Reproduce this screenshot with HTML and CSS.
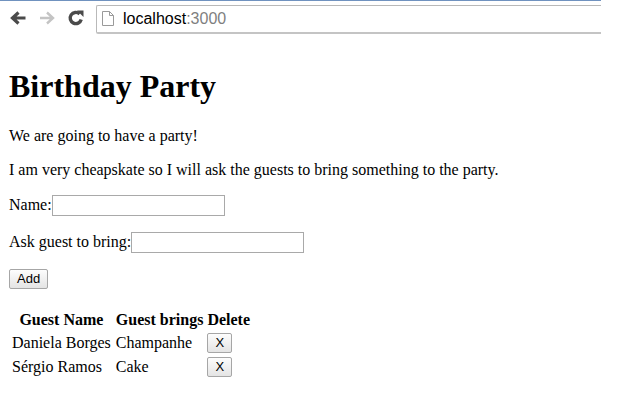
FILE: index.html
```html
<!DOCTYPE html>
<html>
<head>
<meta charset="utf-8">
<title>Birthday Party</title>
<link rel="stylesheet" href="styles.css">
</head>
<body>
<div class="chrome">
  <div class="toolbar">
    <span class="nav-btn">
      <svg width="18" height="16" viewBox="0 0 18 16"><path d="M16.5 8H4M9.5 2.5L3.5 8l6 5.5" fill="none" stroke="#4a4a4a" stroke-width="3.2"/></svg>
    </span>
    <span class="nav-btn">
      <svg width="18" height="16" viewBox="0 0 18 16"><path d="M2 8h12M9 2.5L15 8l-6 5.5" fill="none" stroke="#c4c4c4" stroke-width="2.4"/></svg>
    </span>
    <span class="nav-btn">
      <svg width="18" height="18" viewBox="0 0 18 18"><path d="M14.2 10.5A5.6 5.6 0 1 1 12.6 4.9" fill="none" stroke="#4a4a4a" stroke-width="3.4"/><path d="M10 1.5h6.5v6.5z" fill="#4a4a4a"/></svg>
    </span>
    <div class="omnibox">
      <svg class="page-icon" width="12" height="15" viewBox="0 0 12 15"><path d="M0.5 0.5h7l4 4v10h-11z" fill="#fff" stroke="#9a9a9a"/><path d="M7.5 0.5v4h4" fill="none" stroke="#9a9a9a"/></svg>
      <span class="host">localhost</span><span class="port">:3000</span>
    </div>
  </div>
</div>
<div class="page">
  <h1>Birthday Party</h1>
  <p>We are going to have a party!</p>
  <p>I am very cheapskate so I will ask the guests to bring something to the party.</p>
  <form class="guest-form">
    <p>Name:<input type="text" class="field"></p>
    <p>Ask guest to bring:<input type="text" class="field"></p>
    <button type="button" class="btn">Add</button>
  </form>
  <table class="guests">
    <thead>
      <tr><th>Guest Name</th><th>Guest brings</th><th>Delete</th></tr>
    </thead>
    <tbody>
      <tr><td>Daniela Borges</td><td>Champanhe</td><td><button type="button" class="btn btn-x">X</button></td></tr>
      <tr><td>Sérgio Ramos</td><td>Cake</td><td><button type="button" class="btn btn-x">X</button></td></tr>
    </tbody>
  </table>
</div>
</body>
</html>
```
FILE: styles.css
```css
html, body {
  margin: 0;
  padding: 0;
  background: #fff;
}
body {
  font-family: "Liberation Serif", "Times New Roman", serif;
  font-size: 16px;
  color: #000;
}
.chrome {
  height: 47px;
  width: 640px;
}
.toolbar {
  width: 601px;
  height: 35px;
  border-top: 1px solid #7092bf;
  display: flex;
  align-items: center;
  box-sizing: border-box;
  padding-left: 9px;
}
.nav-btn {
  width: 29px;
  display: flex;
  align-items: center;
}
.omnibox {
  flex: 1;
  height: 29px;
  margin-top: 2px;
  box-sizing: border-box;
  border: 1px solid #b9b9b9;
  border-bottom: 2px solid #c4c4c4;
  border-right: none;
  border-radius: 2px 0 0 2px;
  display: flex;
  align-items: center;
  padding-left: 4px;
  font-family: "Liberation Sans", Arial, sans-serif;
  font-size: 16px;
}
.page-icon {
  margin-right: 9px;
  margin-left: 1px;
}
.host { color: #000; }
.port { color: #7f7f7f; }
.page {
  padding: 0 8px 0 9px;
}
h1 {
  font-size: 32px;
  margin: 21.44px 0;
}
p {
  margin: 16px 0;
}
.field {
  width: 173px;
  height: 21px;
  box-sizing: border-box;
  border: 1px solid #a9a9a9;
  padding: 1px 2px;
  margin: 0;
  vertical-align: baseline;
  font: 13px "Liberation Sans", Arial, sans-serif;
}
.btn {
  font: 13px "Liberation Sans", Arial, sans-serif;
  color: #000;
  height: 20px;
  padding: 0 7px;
  border: 1px solid #a6a6a6;
  border-radius: 2px;
  background: linear-gradient(#fdfdfd, #e4e4e4);
  margin: 0;
}
.btn-x {
  width: 25px;
  padding: 0;
}
.guest-form {
  margin: 0 0 19px;
}
.guests {
  border-spacing: 2px;
}
.guests th, .guests td {
  padding: 1px;
}
.guests th:first-child, .guests td:first-child {
  padding-right: 2px;
}
```
